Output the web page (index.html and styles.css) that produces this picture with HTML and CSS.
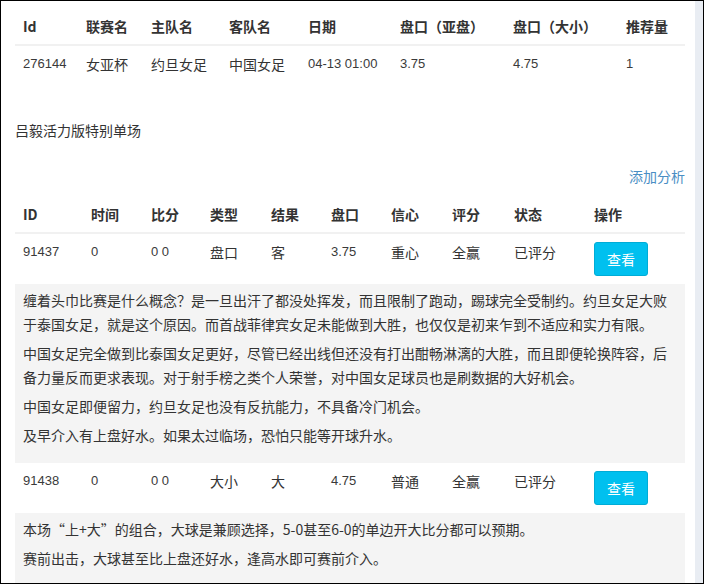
FILE: index.html
```html
<!DOCTYPE html>
<html lang="zh-CN">
<head>
<meta charset="utf-8">
<title>单场分析</title>
<link rel="stylesheet" href="styles.css">
</head>
<body>
<div class="frame">
  <div class="content">
    <table class="tbl t1">
      <thead>
        <tr><th>Id</th><th>联赛名</th><th>主队名</th><th>客队名</th><th>日期</th><th>盘口（亚盘）</th><th>盘口（大小）</th><th>推荐量</th></tr>
      </thead>
      <tbody>
        <tr><td class="num">276144</td><td>女亚杯</td><td>约旦女足</td><td>中国女足</td><td class="num">04-13 01:00</td><td class="num">3.75</td><td class="num">4.75</td><td class="num">1</td></tr>
      </tbody>
    </table>

    <p class="title">吕毅活力版特别单场</p>
    <div class="actions"><a class="link" href="#">添加分析</a></div>

    <table class="tbl t2">
      <thead>
        <tr><th>ID</th><th>时间</th><th>比分</th><th>类型</th><th>结果</th><th>盘口</th><th>信心</th><th>评分</th><th>状态</th><th>操作</th></tr>
      </thead>
      <tbody>
        <tr><td class="num">91437</td><td class="num">0</td><td class="num">0 0</td><td>盘口</td><td>客</td><td class="num">3.75</td><td>重心</td><td>全赢</td><td>已评分</td><td><button class="btn">查看</button></td></tr>
        <tr class="detail"><td colspan="10">
          <p>缠着头巾比赛是什么概念？是一旦出汗了都没处挥发，而且限制了跑动，踢球完全受制约。约旦女足大败于泰国女足，就是这个原因。而首战菲律宾女足未能做到大胜，也仅仅是初来乍到不适应和实力有限。</p>
          <p>中国女足完全做到比泰国女足更好，尽管已经出线但还没有打出酣畅淋漓的大胜，而且即便轮换阵容，后备力量反而更求表现。对于射手榜之类个人荣誉，对中国女足球员也是刷数据的大好机会。</p>
          <p>中国女足即便留力，约旦女足也没有反抗能力，不具备冷门机会。</p>
          <p>及早介入有上盘好水。如果太过临场，恐怕只能等开球升水。</p>
        </td></tr>
        <tr><td class="num">91438</td><td class="num">0</td><td class="num">0 0</td><td>大小</td><td>大</td><td class="num">4.75</td><td>普通</td><td>全赢</td><td>已评分</td><td><button class="btn">查看</button></td></tr>
        <tr class="detail"><td colspan="10">
          <p>本场“上+大”的组合，大球是兼顾选择，5-0甚至6-0的单边开大比分都可以预期。</p>
          <p>赛前出击，大球甚至比上盘还好水，逢高水即可赛前介入。</p>
        </td></tr>
      </tbody>
    </table>
  </div>
  <div class="strip"></div>
</div>
</body>
</html>
```

FILE: styles.css
```css
html, body {
  margin: 0;
  padding: 0;
  background: #fff;
}

body {
  font-family: "Noto Sans CJK SC", "Liberation Sans", sans-serif;
  font-size: 14px;
  line-height: 20px;
  color: #333;
}

.frame {
  width: 704px;
  height: 584px;
  box-sizing: border-box;
  border: 1px solid #000;
  display: flex;
  overflow: hidden;
}

.content {
  flex: 1;
  padding: 7px 10px 0 14px;
  overflow: hidden;
}

.strip {
  width: 8px;
  background: #e9edf3;
}

.tbl {
  width: 670px;
  border-collapse: collapse;
  table-layout: fixed;
}

.tbl th,
.tbl td {
  padding: 8px;
  text-align: left;
  vertical-align: top;
  white-space: nowrap;
}

.tbl th {
  font-weight: bold;
  border-bottom: 2px solid #f1f1f1;
}

.tbl td.num {
  font-family: "Liberation Sans", "Noto Sans CJK SC", sans-serif;
  font-size: 13px;
  color: #3a3a3a;
}

.t1 { margin-bottom: 38px; }
.t1 th:nth-child(1) { width: 47px; }
.t1 th:nth-child(2) { width: 49px; }
.t1 th:nth-child(3) { width: 62px; }
.t1 th:nth-child(4) { width: 63px; }
.t1 th:nth-child(5) { width: 76px; }
.t1 th:nth-child(6) { width: 97px; }
.t1 th:nth-child(7) { width: 97px; }
.t1 th:nth-child(8) { width: 51px; }

.t2 th:nth-child(1) { width: 52px; }
.t2 th:nth-child(2) { width: 44px; }
.t2 th:nth-child(3) { width: 43px; }
.t2 th:nth-child(4) { width: 45px; }
.t2 th:nth-child(5) { width: 44px; }
.t2 th:nth-child(6) { width: 44px; }
.t2 th:nth-child(7) { width: 45px; }
.t2 th:nth-child(8) { width: 46px; }
.t2 th:nth-child(9) { width: 64px; }
.t2 th:nth-child(10) { width: 83px; }

.title {
  margin: 0 0 26px;
}

.actions {
  text-align: right;
  margin-bottom: 10px;
}

.link {
  color: #4a8ec4;
  text-decoration: none;
}

.btn {
  font-family: inherit;
  font-size: 14px;
  line-height: 20px;
  padding: 6px 12px;
  color: #fff;
  background: #00c0ef;
  border: 1px solid #00acd6;
  border-radius: 3px;
  margin-top: 0;
}

.detail td {
  background: #f4f4f4;
  padding: 4px 8px 11px;
  white-space: normal;
}

.detail p {
  margin: 0 0 5px;
  line-height: 24px;
}
```
